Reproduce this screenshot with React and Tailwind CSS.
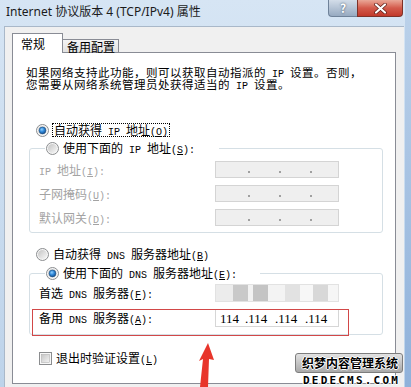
import React from 'react';

// SimSun-like metrics: ASCII runs get a 6px-wide mono face, "&X" underlines the mnemonic letter
function T({ s }) {
  const parts = s.split(/([\x20-\x7e]+)/).filter(Boolean);
  return parts.map((p, i) =>
    /^[\x20-\x7e]+$/.test(p) ? (
      <span key={i} className="whitespace-pre font-['Liberation_Mono',monospace] text-[10px] leading-none tracking-normal">
        {p.split(/&(.)/).map((q, j) => (j % 2 ? <u key={j}>{q}</u> : q))}
      </span>
    ) : (
      <span key={i}>{p}</span>
    )
  );
}

function Radio({ checked }) {
  return (
    <svg width="13" height="13" viewBox="0 0 13 13" className="shrink-0">
      <defs>
        <linearGradient id="rin" x1="0" y1="0" x2="1" y2="1">
          <stop offset="0" stopColor="#c4c4c4" />
          <stop offset="1" stopColor="#f8f8f8" />
        </linearGradient>
        <radialGradient id="rdot" cx="0.4" cy="0.35" r="0.7">
          <stop offset="0" stopColor="#8fd0ff" />
          <stop offset="0.5" stopColor="#2d86d8" />
          <stop offset="1" stopColor="#164a86" />
        </radialGradient>
      </defs>
      <circle cx="6.5" cy="6.5" r="6" fill="#f6f6f6" stroke="#8b8d8f" />
      <circle cx="6.5" cy="6.5" r="4.5" fill="url(#rin)" />
      {checked && <circle cx="6.5" cy="6.5" r="3.4" fill="url(#rdot)" stroke="#1d4f80" strokeWidth="0.6" />}
    </svg>
  );
}

function Checkbox() {
  return (
    <svg width="13" height="13" viewBox="0 0 13 13" className="shrink-0">
      <defs>
        <linearGradient id="cin" x1="0" y1="0" x2="1" y2="1">
          <stop offset="0" stopColor="#c6c6c6" />
          <stop offset="1" stopColor="#f4f4f4" />
        </linearGradient>
      </defs>
      <rect x="0.5" y="0.5" width="12" height="12" fill="#f8f8f8" stroke="#8b8d8f" />
      <rect x="2.5" y="2.5" width="8" height="8" fill="url(#cin)" stroke="#a8a8a8" strokeWidth="0.5" />
    </svg>
  );
}

function DisabledIp() {
  return (
    <div className="w-[124px] h-[17px] bg-[#efefef] border border-[#d4d4d4] flex items-center pt-[4px] pl-[32px] gap-[29px]">
      <span className="w-[2px] h-[2px] bg-[#a0a0a0]" />
      <span className="w-[2px] h-[2px] bg-[#a0a0a0]" />
      <span className="w-[2px] h-[2px] bg-[#a0a0a0]" />
    </div>
  );
}

function DisabledRow({ label }) {
  return (
    <div className="flex items-center h-[17px]">
      <div className="w-[176px] h-[14px] text-[#a3a3a3] leading-[14px]">
        <T s={label} />
      </div>
      <DisabledIp />
    </div>
  );
}

export default function App() {
  return (
    <div className="w-[411px] h-[387px] relative overflow-hidden flex bg-[#a9c4e4] font-['Noto_Sans_CJK_SC',sans-serif] text-[12px] text-black">
      <div className="w-[405px] flex flex-col bg-linear-to-b from-[#d6e5f4] to-[#bdd3ea]">
        {/* title bar */}
        <div className="h-[26px] flex items-start">
          <div className="flex-1 pl-[6px] pt-[4px] leading-[16px] font-['Noto_Sans','Noto_Sans_CJK_SC',sans-serif] text-[12px] text-[#1b1b1b]">
            Internet 协议版本 4 (TCP/IPv4) 属性
          </div>
          <div className="flex mr-[2px]">
            <div className="w-[29px] h-[17px] rounded-bl-[4px] border border-t-0 border-r-0 border-[#6f8299] bg-linear-to-b from-[#d3dde9] to-[#97aac1] flex items-center justify-center text-[12px] font-bold text-white leading-none [text-shadow:0_0_2px_#2e4258]">
              ?
            </div>
            <div className="w-[46px] h-[17px] rounded-br-[4px] border border-t-0 border-[#7e3128] bg-linear-to-b from-[#e9a797] via-[#d35a4b] to-[#c1392b] flex items-center justify-center">
              <svg width="13" height="11" viewBox="0 0 13 11">
                <path d="M2 1.5 L11 9.5 M11 1.5 L2 9.5" stroke="#5a1a14" strokeWidth="3.6" strokeLinecap="round" />
                <path d="M2 1.5 L11 9.5 M11 1.5 L2 9.5" stroke="#ffffff" strokeWidth="2.2" strokeLinecap="round" />
              </svg>
            </div>
          </div>
        </div>

        {/* body */}
        <div className="flex-1 ml-[4px] mr-[1px] bg-[#f0f0f0] border-l border-t border-[#a9b8c9] pl-[7px] pt-[6px]">
          <div className="flex items-end">
            <div className="w-[51px] h-[20px] -mb-px relative z-10 bg-white border border-b-0 border-[#898c95] pl-[8px] pt-[2px] leading-[16px]">
              常规
            </div>
            <div className="w-[56px] h-[13px] border border-b-0 border-l-0 border-[#898c95] bg-linear-to-b from-[#f4f4f4] to-[#e2e2e2] pl-[4px] leading-[13px]">
              备用配置
            </div>
          </div>

          <div className="w-[384px] h-[332px] bg-white border border-[#898c95]">
            <div className="ml-[13px] mt-[13px] whitespace-nowrap text-[11.5px] tracking-[0.5px]">
              <div className="h-[12px] leading-[12px]">
                <T s="如果网络支持此功能，则可以获取自动指派的 IP 设置。否则，" />
              </div>
              <div className="h-[12px] leading-[12px]">
                <T s="您需要从网络系统管理员处获得适当的 IP 设置。" />
              </div>
            </div>

            <div className="ml-[23px] mt-[33px] h-[14px] flex items-center gap-[3px]">
              <Radio checked />
              <span className="h-[14px] border border-dotted border-black px-px leading-[12px]">
                <T s="自动获得 IP 地址(&O)" />
              </span>
            </div>

            <fieldset className="ml-[16px] mr-[12px] mt-[4px] border border-[#d5dfe5] rounded-[3px] pl-[9px] pb-[6px]">
              <legend className="ml-[6px] pl-px pr-[24px] h-[14px] flex items-center gap-[4px] leading-[14px]">
                <Radio />
                <span className="h-[14px]">
                  <T s="使用下面的 IP 地址(&S):" />
                </span>
              </legend>
              <div className="mt-[6px] flex flex-col gap-[7px]">
                <DisabledRow label="IP 地址(&I):" />
                <DisabledRow label="子网掩码(&U):" />
                <DisabledRow label="默认网关(&D):" />
              </div>
            </fieldset>

            <div className="ml-[23px] mt-[14px] h-[14px] flex items-center gap-[4px]">
              <Radio />
              <span className="h-[14px] leading-[14px]">
                <T s="自动获得 DNS 服务器地址(&B)" />
              </span>
            </div>

            <fieldset className="ml-[16px] mr-[12px] mt-[5px] border border-[#d5dfe5] rounded-[3px] pl-[9px] pb-[7px]">
              <legend className="ml-[6px] pl-px pr-[23px] h-[14px] flex items-center gap-[4px] leading-[14px]">
                <Radio checked />
                <span className="h-[14px]">
                  <T s="使用下面的 DNS 服务器地址(&E):" />
                </span>
              </legend>
              <div className="mt-[4px] flex flex-col gap-[7px]">
                <div className="flex items-center h-[18px]">
                  <div className="w-[176px] h-[14px] leading-[14px]">
                    <T s="首选 DNS 服务器(&F):" />
                  </div>
                  <div className="w-[124px] h-[18px] border border-[#e2e2e2] bg-[#f6f6f6] overflow-hidden">
                    <div className="flex h-full blur-[0.6px]">
                      <span className="w-[17px] bg-[#ececec]" />
                      <span className="w-[15px] bg-[#c9c9c9]" />
                      <span className="w-[5px] bg-[#f2f2f2]" />
                      <span className="w-[15px] bg-[#c4c4c4]" />
                      <span className="w-[17px] bg-[#f3f3f3]" />
                      <span className="w-[15px] bg-[#e2e2e2]" />
                      <span className="w-[13px] bg-[#f7f7f7]" />
                      <span className="w-[15px] bg-[#d8d8d8]" />
                    </div>
                  </div>
                </div>
                <div className="flex items-center h-[18px]">
                  <div className="w-[176px] h-[14px] leading-[14px]">
                    <T s="备用 DNS 服务器(&A):" />
                  </div>
                  <div className="w-[124px] h-[18px] border border-[#d6d6d6] bg-white flex items-center pl-[4px] font-['Liberation_Serif',serif] text-[13px] leading-none">
                    <span className="w-[25px]">114</span>
                    <span className="w-[30px]">.114</span>
                    <span className="w-[30px]">.114</span>
                    <span className="w-[30px]">.114</span>
                  </div>
                </div>
              </div>
            </fieldset>

            <div className="ml-[26px] mt-[16px] h-[14px] flex items-center gap-[4px]">
              <Checkbox />
              <span className="h-[14px] leading-[14px]">
                <T s="退出时验证设置(&L)" />
              </span>
            </div>
          </div>
        </div>
      </div>
      <div className="flex-1 bg-linear-to-b from-[#bcd2ea] to-[#8fb1da]" />

      {/* annotation: red box */}
      <div className="absolute left-[32px] top-[309px] w-[317px] h-[27px] border border-[#d24848]" />

      {/* annotation: red arrow */}
      <svg className="absolute left-[195px] top-[340px]" width="25" height="47" viewBox="0 0 25 47">
        <polygon points="13,3 19,20 14,19 13,47 5,47 8,19 4,21" fill="#e8352b" />
      </svg>

      {/* watermark */}
      <div className="absolute left-[295px] top-[353px] w-[108px] h-[20px] rounded-[3px] border border-[#7d7d7d] bg-linear-to-b from-[#e2e2e2] to-[#a9a9a9] pl-[6px] text-[12px] font-bold leading-[18px] text-black whitespace-nowrap [text-shadow:1px_0_#fff,-1px_0_#fff,0_1px_#fff,0_-1px_#fff]">
        织梦内容管理系统
      </div>
      <div className="absolute left-[303px] top-[375px] font-['DejaVu_Sans_Mono',monospace] text-[11px] font-bold leading-[12px] tracking-[2.2px] text-black [text-shadow:1px_0_#fff,-1px_0_#fff,0_1px_#fff,0_-1px_#fff]">
        DEDECMS.COM
      </div>
    </div>
  );
}
